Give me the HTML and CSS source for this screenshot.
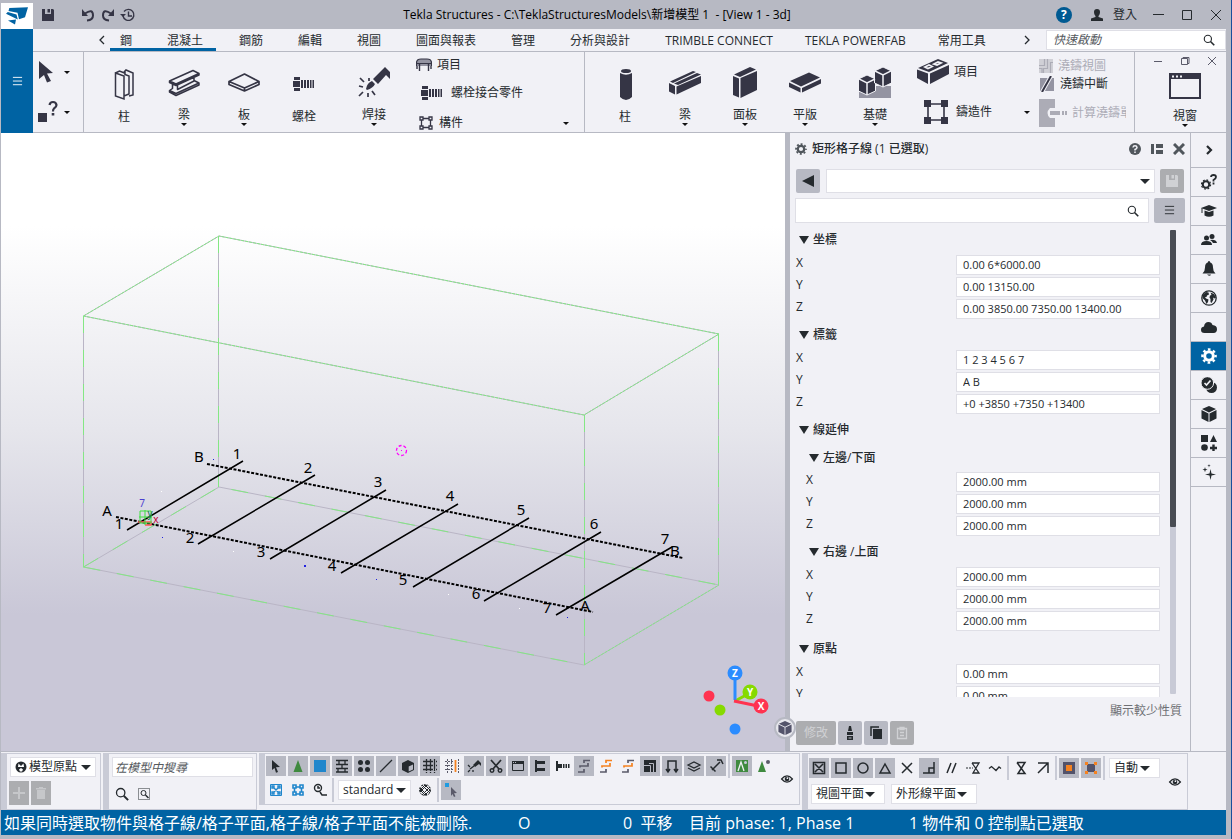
FILE: index.html
```html
<!DOCTYPE html>
<html lang="zh-Hant">
<head>
    <meta charset="UTF-8">
    <meta name="viewport" content="width=device-width, initial-scale=1.0">
    <title>Tekla Structures</title>
    <link rel="stylesheet" href="styles.css">
</head>
<body>
    <!-- shared icons -->
    <svg class="sprite">
        <symbol id="i-search" viewBox="0 0 16 16"><circle cx="6.500" cy="6.500" r="4.800" fill="none" stroke="currentColor" stroke-width="1.500"/><path d="M10 10l5 5" stroke="currentColor" stroke-width="2.200"/></symbol>
        <symbol id="i-save" viewBox="0 0 16 16"><path fill="currentColor" d="M2 2h3v5h6V2h2l1 1v11H2z"/><path fill="currentColor" d="M7.500 2H10v3.500H7.500z"/></symbol>
        <symbol id="i-list" viewBox="0 0 12 12"><path d="M1 1.500h10M1 5.500h10M1 9.500h10" stroke="currentColor"/></symbol>
        <symbol id="i-gear" viewBox="0 0 16 16"><circle cx="8" cy="8" r="4.300" fill="none" stroke="currentColor" stroke-width="3"/><circle cx="8" cy="8" r="6.600" fill="none" stroke="currentColor" stroke-width="2.400" stroke-dasharray="2.600 2.584" stroke-dashoffset="1.300"/></symbol>
        <symbol id="i-bolt" viewBox="0 0 24 16"><path fill="currentColor" d="M2 1h6v3H2zM1 5h7v6H1zM2 12h6v3H2zM9 4h2v8H9zM12 4h2v8h-2zM15 4h2v8h-2zM18 4h1.500v8H18zM20.500 4H22v8h-1.500z"/></symbol>
        <symbol id="i-cube" viewBox="0 0 16 16"><path fill="currentColor" d="M8 0l7 3-7 3.500L1 3zM0.500 4L7.500 7.500V16L.5 12.500zM15.500 4L8.500 7.500V16l7-3.500z"/></symbol>
        <symbol id="i-eye" viewBox="0 0 16 12"><path d="M1.500 6Q8-1.500 14.500 6 8 13.500 1.500 6z" fill="none" stroke="currentColor" stroke-width="1.500"/><circle cx="8" cy="6" r="2.800" fill="currentColor"/><circle cx="8.500" cy="5" r="1" fill="#f1f1f6"/></symbol>
        <symbol id="i-globe" viewBox="0 0 16 16"><circle cx="8" cy="8" r="7.200" fill="none" stroke="currentColor" stroke-width="1.300"/><path fill="currentColor" d="M2 4.500L5 2l2.500.5.5 2-2 1-.5 1.500H4l1 1.500 2.500 1L7 12l-1.500 2L4 10.500 1.500 8zM9.500 2.500L13 4l2 3.500-1.500 1L12 7.500l.5 2-2 3.500-1-1V9L8.500 7.500l.5-2 1.500-.5z"/></symbol>
    </svg>

    <header class="titlebar">
        <div class="logo">
            <svg width="26" height="22" viewBox="0 0 26 22"><path fill="#0063a3" d="M5.300 3L24 2.300l-3 10-6 2-1.500-6.500L4.500 6zM3.800 7L12.500 9.500l1.300 5L2 8.700zM4 15.500l8-1-1 5z"/></svg>
        </div>
        <button class="quick" aria-label="Save"><svg width="16" height="16"><use href="#i-save"/></svg></button>
        <div class="history">
            <button class="quick" aria-label="Undo"><svg width="16" height="16" viewBox="0 0 16 16"><path d="M5 6.500Q13 1 13 8.500 13 13 7 13.500" fill="none" stroke="currentColor" stroke-width="2"/><path fill="currentColor" d="M2 2v7h6z"/></svg></button>
            <button class="quick" aria-label="Redo"><svg width="16" height="16" viewBox="0 0 16 16"><path d="M11 6.500Q3 1 3 8.500 3 13 9 13.500" fill="none" stroke="currentColor" stroke-width="2"/><path fill="currentColor" d="M14 2v7H8z"/></svg></button>
            <button class="quick" aria-label="History"><svg width="16" height="16" viewBox="0 0 16 16"><path d="M3 9a5.500 5.500 0 1 0 1-4.500M8.500 4.500V9H12" fill="none" stroke="currentColor" stroke-width="1.400"/><path fill="currentColor" d="M0 7h6L3 10z"/></svg></button>
        </div>
        <h1 class="title">Tekla Structures - C:\TeklaStructuresModels\新增模型 1&nbsp; - [View 1 - 3d]</h1>
        <div class="account">
            <button class="help" aria-label="Help">?</button>
            <button class="login"><svg width="14" height="14" viewBox="0 0 14 14"><path fill="currentColor" d="M7 1a3 3 0 0 1 3 3c0 2-.8 3-1.500 4v1l4.500 1.500V13H1v-2.500L5.500 9V8C4.800 7 4 6 4 4a3 3 0 0 1 3-3z"/></svg>登入</button>
            <button class="win" aria-label="Minimize"><svg width="12" height="12"><path d="M1 5.500h11" stroke="currentColor"/></svg></button>
            <button class="win" aria-label="Maximize"><svg width="12" height="12"><path d="M1.500 1.500h9v9h-9z" fill="none" stroke="currentColor"/></svg></button>
            <button class="win" aria-label="Close"><svg width="12" height="12"><path d="M1 1l10 10M11 1L1 11" stroke="currentColor"/></svg></button>
        </div>
    </header>

    <div class="top">
        <button class="menu" aria-label="Menu"><svg width="11" height="11"><use href="#i-list"/></svg></button>
        <div class="top-main">
            <nav class="tabs">
                <button class="arrow" aria-label="Previous"><svg width="6" height="10"><path d="M5 1L1 5l4 4" fill="none" stroke="currentColor" stroke-width="1.300"/></svg></button>
                <div class="tab-list">
                    <div class="tab-open">
                        <button class="tab">鋼</button>
                        <button class="tab">混凝土</button>
                    </div>
                    <button class="tab">鋼筋</button>
                    <button class="tab">編輯</button>
                    <button class="tab">視圖</button>
                    <button class="tab">圖面與報表</button>
                    <button class="tab">管理</button>
                    <button class="tab">分析與設計</button>
                    <button class="tab latin">TRIMBLE CONNECT</button>
                    <button class="tab latin">TEKLA POWERFAB</button>
                    <button class="tab">常用工具</button>
                </div>
                <button class="arrow" aria-label="Next"><svg width="6" height="10"><path d="M1 1l4 4-4 4" fill="none" stroke="currentColor" stroke-width="1.300"/></svg></button>
                <label class="launch"><input type="text" placeholder="快速啟動" aria-label="快速啟動"><svg width="12" height="12"><use href="#i-search"/></svg></label>
            </nav>

            <div class="ribbon">
                <div class="pickers">
                    <button class="picker drop" aria-label="Select"><svg width="22" height="24" viewBox="0 0 22 24"><path fill="currentColor" d="M2 1l14 12-6 .5L14 21l-4 1.500L7 15l-5 4z"/></svg></button>
                    <button class="picker drop" aria-label="Inquire"><svg width="22" height="24" viewBox="0 0 22 24"><path fill="currentColor" d="M1 13h9v9H1z"/><path d="M12.500 5Q13 2 16 2t3.500 3Q19.500 7 17 8.500q-1 .8-1 3" fill="none" stroke="currentColor" stroke-width="2.200"/><path fill="currentColor" d="M14.700 13h2.600v2.500h-2.600z"/></svg></button>
                </div>
                <div class="tools steel">
                    <button class="tool"><svg width="32" height="32" viewBox="0 0 32 32"><g fill="none" stroke="currentColor" stroke-width="1.500"><path d="M7.500 5l8.500 3v23l-8.500-3zM16 4l2-2 7 3v22l-4 1M7.500 5l4-2 5 2M16 28l5-2V8l-4-1.500V2.500"/></g></svg><span>柱</span></button>
                    <button class="tool drop"><svg width="32" height="32" viewBox="0 0 32 32"><g fill="none" stroke="currentColor" stroke-width="1.500" stroke-linejoin="round"><path d="M1.500 14L25 3.500 31 6.500 8 17zM1.500 14v1.500L8 18.500V17M8 18.500L31 8V6.500M4.500 17.500v4L1.500 23.500 8 26.500 31 16l-5-2.500M1.500 23.500V25L8 28.500 31 18v-2M9.500 18.500v4L26 14v-3"/></g></svg><span>梁</span></button>
                    <button class="tool drop"><svg width="32" height="32" viewBox="0 0 32 32"><path d="M1 14.500L16.500 7 31 14.500v3L16.500 24 1 17.500zM1 14.500L16.500 21 31 14.500M16.500 21v3" fill="none" stroke="currentColor" stroke-width="1.700" stroke-linejoin="round"/></svg><span>板</span></button>
                    <button class="tool"><svg class="bolt" width="24" height="16"><use href="#i-bolt"/></svg><span>螺栓</span></button>
                    <button class="tool wide drop"><svg width="32" height="34" viewBox="0 0 32 34"><path fill="currentColor" d="M15 13L27 1l5 5v7l-4-4-8 9zM8 23q1-6 6-8l3 3q-2 4-8 6z"/><path d="M1 20l4 1M2 12l4 4M11 12v3M1 30l4-4M10 27v4M14 25l3 4" stroke="currentColor" stroke-width="1.700"/></svg><span>焊接</span></button>
                </div>
                <div class="list-tools components">
                    <button class="row-tool"><svg width="16" height="14" viewBox="0 0 16 14"><path d="M.5 8V5Q.5 1 5 1h6q4.500 0 4.500 4v3M.5 5.500h15" fill="#9494a2" stroke="currentColor" stroke-width="1.200"/><path d="M3.500 6v7M12.500 6v7M1 8v3M15 8v3" stroke="currentColor" stroke-width="1.400"/></svg>項目</button>
                    <button class="row-tool indent"><svg width="24" height="16"><use href="#i-bolt"/></svg>螺栓接合零件</button>
                    <button class="row-tool drop-end inset"><svg width="14" height="14" viewBox="0 0 14 14"><path d="M1 1h3v3H1zM10 1h3v3h-3zM1 10h3v3H1zM10 10h3v3h-3zM4 2.500h6M4 11.500h6M2.500 4v6M11.500 4v6" fill="none" stroke="currentColor" stroke-width="1.300"/></svg>構件</button>
                </div>
                <div class="tools concrete">
                    <button class="tool"><svg width="32" height="32" viewBox="0 0 32 32"><path fill="currentColor" d="M11 5q6 3.500 12 0v24q-6 6-12 0z"/><ellipse cx="17" cy="3" rx="5" ry="2" fill="currentColor"/></svg><span>柱</span></button>
                    <button class="tool drop"><svg width="32" height="32" viewBox="0 0 32 32"><path fill="currentColor" d="M1 14.500L24 4l3 1L4 16zM5 16.500L28 6l4 1.500L9 18zM0 16l6 3v8.500l-6-3zM7.500 19.500L32 9v7L7.500 27.500z"/></svg><span>梁</span></button>
                    <button class="tool drop"><svg width="32" height="34" viewBox="0 0 32 34"><path fill="currentColor" d="M5 8.500L21 1l6 2.500L11 11zM4 10l6 2.500v19L4 29zM11.500 12L28 5v19l-16.500 8z"/></svg><span>面板</span></button>
                    <button class="tool drop"><svg width="32" height="32" viewBox="0 0 32 32"><path fill="currentColor" d="M1 14L20 5.500l11 5L12 19.500zM0 15.500L11.500 21v4.500L0 20zM13 21l19-9v4.500l-19 9z"/></svg><span>平版</span></button>
                    <button class="tool wide drop"><svg width="32" height="34" viewBox="0 0 32 34"><path fill="#9494a2" d="M0 24h8l8-3V20h16v12H0z"/><g fill="currentColor" stroke="#f1f1f6"><path d="M8 9l8.500 4v12L8 29-.5 25V13z"/><path d="M24 1l8.500 4v12L24 21l-8.500-4V5z"/></g><path d="M0 13l8 4 8-4M8 17v12M16 5l8 4 8-4M24 9v12" fill="none" stroke="#f1f1f6" stroke-width="1.500"/></svg><span>基礎</span></button>
                </div>
                <div class="list-tools cast">
                    <button class="row-tool big"><svg width="32" height="28" viewBox="0 0 32 28"><path fill="currentColor" d="M1 10L21 1l10 4-19 9zM0 11.500l11 4V26L0 20zM13 15.500L32 7v9L13 26z"/><path d="M8 9l4-2 3 1.500-4 2zM17 6l4-2 3 1-4 2z" fill="none" stroke="#f1f1f6" stroke-width="1.800"/></svg>項目</button>
                    <button class="row-tool big drop-end"><svg width="26" height="26" viewBox="0 0 26 26"><path d="M1 1h7v7H1zM18 1h7v7h-7zM1 18h7v7H1zM18 18h7v7h-7z" fill="currentColor"/><path d="M5 5h16v16H5z" fill="none" stroke="currentColor" stroke-width="1.600"/></svg>鑄造件</button>
                </div>
                <div class="list-tools pour">
                    <button class="row-tool" disabled><svg width="14" height="14" viewBox="0 0 14 14"><path fill="#d0d0d6" d="M0 0h14v14H0z"/><path d="M0 6.500h5.500V0M0 9.500h3V14M8.500 0v9.500H4.500V14M14 3.500h-2.500V14" fill="none" stroke="currentColor" stroke-width="1.200"/></svg>澆鑄視圖</button>
                    <button class="row-tool"><svg width="16" height="16" viewBox="0 0 16 16"><path fill="#9494a2" d="M1 2h14v13H1z"/><path d="M3 16L12 0" stroke="#f1f1f6" stroke-width="4"/><path d="M3 16L12 0" stroke="currentColor" stroke-width="2"/></svg>澆鑄中斷</button>
                    <button class="row-tool last" disabled><svg width="28" height="28" viewBox="0 0 28 28"><path fill="currentColor" d="M0 0h16v9h-5q-5 5 0 10h5v9H0z"/><path d="M11 14h10" stroke="currentColor" stroke-width="4"/><path d="M23 14h5" stroke="currentColor" stroke-width="4" stroke-dasharray="2 1"/></svg>計算澆鑄單</button>
                </div>
                <div class="windows">
                    <div class="mdi">
                        <button aria-label="Minimize view"><svg width="10" height="10"><path d="M1 5.500h8" stroke="currentColor"/></svg></button>
                        <button aria-label="Restore view"><svg width="10" height="10"><path d="M1.500 2.500h6v6h-6zM3 2.500v-1h6v6H7.500" fill="none" stroke="currentColor"/></svg></button>
                        <button aria-label="Close view"><svg width="10" height="10"><path d="M1 1l8 8M9 1L1 9" stroke="currentColor"/></svg></button>
                    </div>
                    <button class="tool drop"><svg width="32" height="26" viewBox="0 0 32 26"><path d="M1 1h30v24H1z" fill="none" stroke="currentColor" stroke-width="2"/><path fill="currentColor" d="M1 1h30v5H1z"/><path d="M3 3.500h10" stroke="#f1f1f6" stroke-width="2" stroke-dasharray="2 2"/></svg><span>視窗</span></button>
                </div>
            </div>
        </div>
    </div>

    <main class="work">
        <section class="view">
            <svg class="model" viewBox="1 133 784 618" preserveAspectRatio="xMinYMin meet">
                <!-- work area box -->
                <g fill="none" stroke="#b9b5c5">
                    <path d="M83.500 316L219 236l500 98-135 81zM83.500 567L219 487l500 98-135 80zM83.500 316v251M218.500 236v251M718.500 334v251M584.500 415v250"/>
                    <path stroke="#84e784" stroke-dasharray="17 17" d="M83.500 567L219 487l500 98M83.500 567L584 665M83.500 316v251M218.500 236v251M718.500 334v251M584.500 415v250"/>
                    <path stroke="#84e784" stroke-dasharray="3 1" d="M83.500 316L219 236l500 98-135 81zM584 665l135-80"/>
                </g>
                <!-- grid -->
                <g stroke="#000" stroke-width="1.500">
                    <path stroke-width="2" stroke-dasharray="3 1.500" d="M116 517l477 95M207 464l476 94"/>
                    <path d="M127 530l116-69M198 544l117-69M270 559l116-69M341 573l117-69M413 587l116-69M484 601l117-69M556 615l116-68"/>
                </g>
                <g class="grid-text">
                    <text x="237" y="459">1</text><text x="308" y="473">2</text><text x="378" y="487">3</text><text x="450" y="501">4</text><text x="521" y="515">5</text><text x="594" y="529">6</text><text x="665" y="544">7</text>
                    <text x="119" y="529">1</text><text x="190" y="543">2</text><text x="261" y="557">3</text><text x="332" y="571">4</text><text x="403" y="585">5</text><text x="476" y="599">6</text><text x="547" y="613">7</text>
                    <text x="199" y="462">B</text><text x="107" y="516">A</text><text x="675" y="556">B</text><text x="585" y="611">A</text>
                </g>
                <!-- origin marker -->
                <path d="M138 522h13v3h-6" fill="none" stroke="#f55" stroke-width="1.500"/>
                <path d="M140 511h11v12h-11zM145 510v15M139 517h13" fill="none" stroke="#3ee03e"/>
                <text class="axis-z" x="142" y="507">7</text>
                <text class="axis-y" x="150" y="517">y</text>
                <text class="axis-x" x="156" y="523">x</text>
                <circle cx="401.500" cy="450.500" r="5" fill="none" stroke="#f0f" stroke-width="1.300" stroke-dasharray="3 2"/>
                <path fill="#f0f" d="M401 450h1v1h-1z"/>
                <path fill="#2222e0" d="M304 565h2v2h-2zM376 579h1v1h-1zM567 617h1v1h-1zM213 459h1v1h-1zM162 537h1v1h-1z"/>
                <path fill="#fff" d="M161 491h1v1h-1zM233 551h1v1h-1zM519 608h1v1h-1zM448 594h1v1h-1z"/>
                <!-- orientation gizmo -->
                <path d="M735 701l13-7" stroke="#86da00" stroke-width="3"/>
                <path d="M735 700v-24" stroke="#2b8cff" stroke-width="3"/>
                <path d="M734 701l24 5" stroke="#ff3350" stroke-width="3"/>
                <circle cx="735" cy="673" r="7.500" fill="#2b8cff"/><circle cx="750" cy="692" r="7.500" fill="#86da00"/><circle cx="761" cy="706" r="7.500" fill="#ff3350"/>
                <circle cx="709" cy="696" r="5.500" fill="#ff3350"/><circle cx="720" cy="710" r="5.500" fill="#86da00"/><circle cx="735" cy="729" r="5.500" fill="#2b8cff"/>
                <g class="ball-text"><text x="735" y="677">Z</text><text x="750" y="696">Y</text><text x="761" y="710">X</text></g>
            </svg>
            <button class="view-cube" aria-label="View cube"><svg width="14" height="14"><use href="#i-cube"/></svg></button>
        </section>

        <aside class="props">
            <header class="props-head">
                <svg width="12" height="12"><use href="#i-gear"/></svg>
                <h2>矩形格子線 (1 已選取)</h2>
                <button aria-label="Help"><svg width="12" height="12" viewBox="0 0 12 12"><circle cx="6" cy="6" r="6" fill="currentColor"/><path d="M4 4.500Q4.200 2.700 6 2.700T8 4.400Q8 5.500 6 6.500V7.500M6 8.500V10" fill="none" stroke="#f1f1f6" stroke-width="1.500"/></svg></button>
                <button aria-label="Layout"><svg width="12" height="12" viewBox="0 0 12 12"><path fill="currentColor" d="M0 1h3v10H0zM5 1h7v4H5zM5 7h7v4H5z"/></svg></button>
                <button aria-label="Close"><svg width="12" height="12" viewBox="0 0 12 12"><path d="M1 1l10 10M11 1L1 11" stroke="currentColor" stroke-width="3"/></svg></button>
            </header>
            <div class="props-bar">
                <button class="sq" aria-label="Back"><svg width="12" height="12"><path fill="currentColor" d="M0 6l12-6v12z"/></svg></button>
                <span class="pick preset"><select aria-label="Preset"><option></option></select></span>
                <button class="sq" disabled aria-label="Save"><svg width="16" height="16"><use href="#i-save"/></svg></button>
            </div>
            <div class="props-bar second">
                <label class="find"><input type="text" aria-label="Search properties"><svg width="12" height="12"><use href="#i-search"/></svg></label>
                <button class="sq list" aria-label="List"><svg width="11" height="11"><use href="#i-list"/></svg></button>
            </div>
            <div class="props-body">
                <div class="fields">
                    <h3>坐標</h3>
                    <label>X<input type="text" value="0.00 6*6000.00"></label>
                    <label>Y<input type="text" value="0.00 13150.00"></label>
                    <label>Z<input type="text" value="0.00 3850.00 7350.00 13400.00"></label>
                    <h3>標籤</h3>
                    <label>X<input type="text" value="1 2 3 4 5 6 7"></label>
                    <label>Y<input type="text" value="A B"></label>
                    <label>Z<input type="text" value="+0 +3850 +7350 +13400"></label>
                    <h3>線延伸</h3>
                    <div class="nested">
                        <h4>左邊/下面</h4>
                        <label>X<input type="text" value="2000.00 mm"></label>
                        <label>Y<input type="text" value="2000.00 mm"></label>
                        <label>Z<input type="text" value="2000.00 mm"></label>
                        <h4>右邊 /上面</h4>
                        <label>X<input type="text" value="2000.00 mm"></label>
                        <label>Y<input type="text" value="2000.00 mm"></label>
                        <label>Z<input type="text" value="2000.00 mm"></label>
                    </div>
                    <h3>原點</h3>
                    <label>X<input type="text" value="0.00 mm"></label>
                    <label>Y<input type="text" value="0.00 mm"></label>
                </div>
                <div class="track"><div class="thumb"></div></div>
            </div>
            <a class="less" href="#">顯示較少性質</a>
            <footer class="props-foot">
                <button class="sq modify" disabled>修改</button>
                <button class="sq" aria-label="Clean"><svg width="12" height="14" viewBox="0 0 12 14"><path fill="currentColor" d="M5 0h2l1 5H4zM3 6h6v3H3zM3 10h6v4H3z"/><path d="M4.500 12h3" stroke="#b7b9c3"/></svg></button>
                <button class="sq" aria-label="Copy"><svg width="12" height="14" viewBox="0 0 12 14"><path fill="currentColor" d="M3 3h9v10H3z"/><path d="M1 10V1h8" fill="none" stroke="currentColor" stroke-width="1.500"/></svg></button>
                <button class="sq" disabled aria-label="Paste"><svg width="12" height="14" viewBox="0 0 12 14"><path d="M1.500 2.500h9v10h-9zM4 1.500h4v2H4zM4 6.500h4M4 9.500h4" fill="none" stroke="currentColor" stroke-width="1.300"/></svg></button>
            </footer>
        </aside>

        <nav class="side">
            <button aria-label="Collapse"><svg width="16" height="16"><path d="M6 4l4 4-4 4" fill="none" stroke="currentColor" stroke-width="2.200"/></svg></button>
            <button aria-label="Settings help"><svg width="16" height="16" viewBox="0 0 16 16"><circle cx="5" cy="10.500" r="3.200" fill="none" stroke="currentColor" stroke-width="2"/><circle cx="5" cy="10.500" r="4.600" fill="none" stroke="currentColor" stroke-width="1.200" stroke-dasharray="1.800 1.800"/><path d="M10 3Q10 1 12.500 1T15 3q0 1.500-2.500 3v1.500M12.500 8.500v2" fill="none" stroke="currentColor" stroke-width="1.800"/></svg></button>
            <button aria-label="Learning"><svg width="16" height="16" viewBox="0 0 16 16"><path fill="currentColor" d="M0 5l8-3 8 3-8 3zM3.500 7.500L8 9l4.500-1.500v5Q8 15 3.500 12.500z"/><path d="M1 5v5" stroke="currentColor"/></svg></button>
            <button aria-label="People"><svg width="16" height="16" viewBox="0 0 16 16"><circle cx="5.500" cy="6" r="2.500" fill="currentColor"/><circle cx="11" cy="4.500" r="2.500" fill="currentColor"/><path fill="currentColor" d="M0 13q0-4 5.500-4t5.500 4zM9 8q6-1 7 3h-4Q11 9 9 8z"/></svg></button>
            <button aria-label="Notifications"><svg width="16" height="16" viewBox="0 0 16 16"><path fill="currentColor" d="M8 0q1 0 1 1.200 3 1 3 5.300 0 4 2.500 6h-13q2.500-2 2.500-6 0-4.300 3-5.300Q7 0 8 0zM6 13.500h4q-1 2.500-4 0z"/></svg></button>
            <button aria-label="Online"><svg width="16" height="16"><use href="#i-globe"/></svg></button>
            <button aria-label="Cloud"><svg width="16" height="16" viewBox="0 0 16 16"><path fill="currentColor" d="M3.500 14Q0 14 0 10.800 0 8 3 7.500 3.500 3 7.500 3q3.200 0 4 3Q16 6.500 16 10.300 16 14 12.500 14z"/></svg></button>
            <button class="active" aria-label="Properties"><svg width="16" height="16"><use href="#i-gear"/></svg></button>
            <button aria-label="Validate"><svg width="16" height="16" viewBox="0 0 16 16"><circle cx="10.500" cy="10.500" r="5.500" fill="currentColor"/><circle cx="6.300" cy="6" r="6.300" fill="currentColor" stroke="#f1f1f6"/><path d="M3.500 6l2 2 4-4.500" fill="none" stroke="#f1f1f6" stroke-width="1.700"/></svg></button>
            <button aria-label="Model"><svg width="16" height="16"><use href="#i-cube"/></svg></button>
            <button aria-label="Applications"><svg width="16" height="16" viewBox="0 0 16 16"><path fill="currentColor" d="M0 0h7v7H0zM12.500 0L16 7H9zM11.300 9.500h2.400v2.300H16v2.400h-2.300v2.300h-2.400v-2.300H9v-2.400h2.300z"/><circle cx="3.500" cy="12.500" r="3.300" fill="currentColor"/></svg></button>
            <button aria-label="Assistant"><svg width="16" height="16" viewBox="0 0 16 16"><path fill="currentColor" d="M9.500 5l1 4.500L15 10.500l-4.500 1-1 4.500-1-4.500-4.500-1 4.500-1zM4 3l.6 2 2 .6-2 .6L4 8.200l-.6-2-2-.6 2-.6zM8 0l.4 1.300 1.300.4-1.300.4L8 3.500l-.4-1.400-1.300-.4 1.300-.4z"/></svg></button>
        </nav>
    </main>

    <div class="docks">
        <section class="dock origin">
            <label class="pick box"><svg width="12" height="12" viewBox="0 0 12 12"><circle cx="6" cy="6" r="5.500" fill="currentColor"/><path fill="#fff" d="M3.500 2.500L6 5l2.500-2.500L9 6H3zM4 8.500L6 7l2 1.500-1 2H5z"/></svg><select aria-label="Origin"><option>模型原點</option></select></label>
            <div class="line">
                <button class="ic gray" disabled aria-label="Add"><svg width="14" height="14"><path d="M7 1v12M1 7h12" stroke="currentColor" stroke-width="2"/></svg></button>
                <button class="ic gray" disabled aria-label="Delete"><svg width="14" height="14"><path fill="currentColor" d="M3 4h8v9H3zM2 2h3V1h4v1h3v1.500H2z"/></svg></button>
            </div>
        </section>

        <section class="dock model-find">
            <input type="text" placeholder="在模型中搜尋" aria-label="在模型中搜尋">
            <div class="line">
                <button class="ic" aria-label="Search"><svg width="14" height="14"><use href="#i-search"/></svg></button>
                <button class="ic" aria-label="Search area"><svg width="14" height="14" viewBox="0 0 14 14"><path d="M1.500 1.500h11v11h-11z" fill="none" stroke="currentColor" stroke-dasharray="1 1"/><circle cx="6.500" cy="6" r="2.500" fill="none" stroke="currentColor"/><path d="M8.500 8l3 3" stroke="currentColor" stroke-width="1.500"/></svg></button>
            </div>
        </section>

        <section class="dock select-dock">
            <div class="lines">
                <div class="line">
                    <button class="ic on" aria-label="Select all"><svg width="16" height="16"><path fill="currentColor" d="M4 2l8 7-4 .3L10 14l-2 .8L6.500 10 4 12z"/></svg></button>
                    <button class="ic on" aria-label="Connections"><svg width="16" height="16"><path fill="#3f8a3f" d="M8 2l4.500 12h-9z"/></svg></button>
                    <button class="ic on" aria-label="Parts"><svg width="16" height="16"><path fill="#1f86cc" d="M2 2h12v12H2z"/></svg></button>
                    <button class="ic on" aria-label="Surface"><svg width="16" height="16"><path d="M2 2.500h12M2 6.500h12M2 10.500h12M5 3v3M11 3v3M8 7v3M4 11v3M11 11v3M2 14h12" stroke="currentColor" stroke-width="1.300"/></svg></button>
                    <button class="ic on" aria-label="Points"><svg width="16" height="16"><g fill="currentColor"><circle cx="4.500" cy="4.500" r="2.500"/><circle cx="11.500" cy="4.500" r="2.500"/><circle cx="4.500" cy="11.500" r="2.500"/><circle cx="11.500" cy="11.500" r="2.500"/></g></svg></button>
                    <button class="ic on" aria-label="Lines"><svg width="16" height="16"><path d="M2 14L14 2" stroke="currentColor" stroke-width="1.300"/></svg></button>
                    <button class="ic on" aria-label="Reference models"><svg width="16" height="16" viewBox="0 0 16 16"><path fill="currentColor" d="M8 2l6 3v7l-6 3-6-3V5z"/><path fill="#b7b9c3" d="M8.700 8.500L13 6.500v5l-4.300 2z"/></svg></button>
                    <button class="ic on" aria-label="Grid"><svg width="16" height="16"><path d="M1 3.500h14M1 7.500h14M1 11.500h14M4.500 1v14M8.500 1v14M12.500 1v14" stroke="currentColor" stroke-width="1.300" stroke-dasharray="10 1 1 1"/></svg></button>
                    <button class="ic" aria-label="Grid line"><svg width="16" height="16"><path d="M1 3.500h9M1 7.500h9M1 11.500h9M3.500 1v14M7.500 1v14M14.500 1v14" stroke="#5b5b6a" stroke-dasharray="2 1"/><path d="M11.500 2v12" stroke="#f58220" stroke-width="1.800"/></svg></button>
                    <button class="ic on" aria-label="Welds"><svg width="16" height="16"><path fill="currentColor" d="M7 7l5-5 3 3v3l-2-2-4 3z"/><path d="M4 11l4-3M2 7l2 2M2 14l2-2M7 12v2" stroke="currentColor" stroke-width="1.300"/></svg></button>
                    <button class="ic on" aria-label="Cuts"><svg width="16" height="16"><path d="M3 2l8 9M13 2l-8 9" stroke="currentColor" stroke-width="1.700"/><g fill="none" stroke="currentColor" stroke-width="1.400"><circle cx="4" cy="12.500" r="1.800"/><circle cx="12" cy="12.500" r="1.800"/></g></svg></button>
                    <button class="ic on" aria-label="Views"><svg width="16" height="16"><path d="M2.500 3.500h11v9h-11z" fill="none" stroke="currentColor"/><path d="M2 4.500h12" stroke="currentColor" stroke-width="3"/><path d="M3 4.500h4" stroke="#b7b9c3" stroke-dasharray="1 1"/></svg></button>
                    <button class="ic on" aria-label="Fittings"><svg width="16" height="16"><path fill="currentColor" d="M3 2h2v12H3zM5 3h8v3H5zM5 10h8v3H5z"/></svg></button>
                    <button class="ic" aria-label="Bolts"><svg width="16" height="16"><path fill="currentColor" d="M2 3h2v10H2zM4 6h4v4H4zM9 6h1.500v4H9zM11.500 6H13v4h-1.500zM14 6h1.500v4H14z"/></svg></button>
                    <button class="ic on" aria-label="Rebar set"><svg width="16" height="16"><g fill="none" stroke="#5b5b6a" stroke-width="1.700"><path d="M8 5V2.500h6M4 9.500V8h8V5M2 14h6v-3"/></g></svg></button>
                    <button class="ic" aria-label="Rebar group"><svg width="16" height="16"><g fill="none" stroke="#f58220" stroke-width="1.700"><path d="M8 5V2.500h6M4 9.500V8h8V5"/><path stroke="#5b5b6a" d="M2 14h6v-3"/></g></svg></button>
                    <button class="ic" aria-label="Single rebar"><svg width="16" height="16"><g fill="none" stroke="#5b5b6a" stroke-width="1.700"><path d="M8 5V2.500h6M2 14h6v-3"/><path stroke="#f58220" d="M4 9.500V8h8V5"/></g></svg></button>
                    <button class="ic on" aria-label="Pour"><svg width="16" height="16"><path fill="currentColor" d="M2 2h12v12H2z"/><path d="M2 7.500h6.500V14M7 5.500h4.500V14" stroke="#b7b9c3" fill="none"/></svg></button>
                    <button class="ic on" aria-label="Load"><svg width="16" height="16"><path d="M4 13V3h8v10M2 11l2 3 2-3M10 11l2 3 2-3" fill="none" stroke="currentColor" stroke-width="1.500"/></svg></button>
                    <button class="ic on" aria-label="Planes"><svg width="16" height="16"><path d="M2 7l6-3 6 3-6 3zM2 10l6 3 6-3" fill="none" stroke="currentColor" stroke-width="1.300"/></svg></button>
                    <button class="ic on" aria-label="Distances"><svg width="16" height="16"><path d="M4 12l8-8M2.500 8.500l5 5M9 2h4l2 4" fill="none" stroke="currentColor" stroke-width="1.500"/></svg></button>
                    <i class="sep"></i>
                    <button class="ic on" aria-label="Components"><svg width="16" height="16"><path fill="#3f8a3f" d="M2 2h12v12H2z"/><path d="M4 13l3-9 3 9" fill="none" stroke="#f1f1f6" stroke-width="1.300"/><circle cx="11.500" cy="4.500" r="1.500" fill="#ccd"/></svg></button>
                    <button class="ic" aria-label="Component objects"><svg width="16" height="16"><path fill="#3f8a3f" d="M6 3l4 11H2z"/><circle cx="12" cy="4" r="2" fill="#5b5b6a"/></svg></button>
                </div>
                <div class="line">
                    <button class="ic" aria-label="Assemblies"><svg width="16" height="16"><path d="M2.500 2.500h11v11h-11z" fill="none" stroke="#1f86cc"/><path d="M4 4h2v2H4zM10 4h2v2h-2zM4 10h2v2H4zM10 10h2v2h-2zM6 6l4 4M10 6l-4 4" fill="none" stroke="#1f86cc" stroke-width="1.400"/></svg></button>
                    <button class="ic" aria-label="Objects in assemblies"><svg width="16" height="16"><path d="M3 3h3v3H3zM10 3h3v3h-3zM3 10h3v3H3zM10 10h3v3h-3zM6 5h4M6 12h4M4.500 6v4M11.500 6v4" fill="none" stroke="#1f86cc" stroke-width="1.600"/></svg></button>
                    <button class="ic" aria-label="Tasks"><svg width="16" height="16"><circle cx="6" cy="6" r="3.500" fill="none" stroke="currentColor" stroke-width="1.400"/><path d="M6 4v2h2M8 10l2 3h5" fill="none" stroke="currentColor" stroke-width="1.500"/></svg></button>
                    <i class="sep"></i>
                    <span class="pick box filter"><select aria-label="Filter"><option>standard</option></select></span>
                    <button class="ic" aria-label="Filter settings"><svg width="16" height="16"><circle cx="8" cy="8" r="5.500" fill="none" stroke="currentColor" stroke-dasharray="2 1"/><path d="M3 6l7 7M5 3l8 8M3 10l7-7M5 13l8-8M3 8l5 5M8 3l5 5M3 8l5-5M8 13l5-5" stroke="currentColor"/></svg></button>
                    <i class="sep"></i>
                    <button class="ic on" aria-label="Direct modification"><svg width="16" height="16"><path fill="#1f9be0" d="M2 1h4v4H2z"/><path fill="#5b5b6a" d="M8 5l6 6-3 .3 1.500 3-1.500.7-1.500-3-1.500 2z"/></svg></button>
                </div>
            </div>
            <button class="eye" aria-label="Show"><svg width="14" height="10"><use href="#i-eye"/></svg></button>
        </section>

        <section class="dock snap-dock">
            <div class="lines">
                <div class="line">
                    <button class="ic on" aria-label="Reference points"><svg width="16" height="16"><path d="M2.500 2.500h11v11h-11zM4 4l8 8M12 4l-8 8" fill="none" stroke="currentColor" stroke-width="1.600"/></svg></button>
                    <button class="ic on" aria-label="End points"><svg width="16" height="16"><path d="M3 3h10v10H3z" fill="none" stroke="currentColor" stroke-width="1.500"/></svg></button>
                    <button class="ic on" aria-label="Centre"><svg width="16" height="16"><circle cx="8" cy="8" r="5" fill="none" stroke="currentColor" stroke-width="1.500"/></svg></button>
                    <button class="ic on" aria-label="Mid points"><svg width="16" height="16"><path d="M8 4l5 9H3z" fill="none" stroke="currentColor" stroke-width="1.500"/></svg></button>
                    <button class="ic" aria-label="Intersection"><svg width="16" height="16"><path d="M3 3l10 10M13 3L3 13" stroke="currentColor" stroke-width="1.500"/></svg></button>
                    <button class="ic on" aria-label="Perpendicular"><svg width="16" height="16"><path d="M2 13h11V2M8 13V8h5" fill="none" stroke="currentColor" stroke-width="1.500"/></svg></button>
                    <button class="ic" aria-label="Parallel"><svg width="16" height="16"><path d="M4 13L8 3M9 13l4-10" stroke="currentColor" stroke-width="1.500"/></svg></button>
                    <button class="ic" aria-label="Extension"><svg width="16" height="16"><path d="M7 3h7L8 13h6L7 3" fill="none" stroke="currentColor" stroke-width="1.300"/><path d="M1 8h7" stroke="currentColor" stroke-dasharray="2 1"/></svg></button>
                    <button class="ic" aria-label="Free"><svg width="16" height="16"><path d="M2 8.500l2.500-2 4.500 4 3-3.500 2 1.500" fill="none" stroke="currentColor" stroke-width="1.300"/></svg></button>
                    <i class="sep"></i>
                    <button class="ic" aria-label="Nearest"><svg width="16" height="16"><path d="M4 2.500h8L5 13.500h7L4 2.500" fill="none" stroke="currentColor" stroke-width="1.500"/></svg></button>
                    <button class="ic" aria-label="Line snap"><svg width="16" height="16"><path d="M3 3h10v10M13 3L3 13" fill="none" stroke="currentColor" stroke-width="1.500"/></svg></button>
                    <i class="sep"></i>
                    <button class="ic on" aria-label="Geometry"><svg width="16" height="16"><path fill="#53536a" d="M2 2h12v12H2z"/><path fill="#f58220" d="M5 5h6v6H5z"/></svg></button>
                    <button class="ic on" aria-label="Handles"><svg width="16" height="16"><path fill="#53536a" d="M4 4h8v8H4z"/><path fill="#f58220" d="M2 2h3v3H2zM11 2h3v3h-3zM2 11h3v3H2zM11 11h3v3h-3z"/></svg></button>
                    <i class="sep"></i>
                    <span class="pick box auto"><select aria-label="Depth"><option>自動</option></select></span>
                </div>
                <div class="line planes">
                    <span class="pick box"><select aria-label="View plane"><option>視圖平面</option></select></span>
                    <span class="pick box"><select aria-label="Outline plane"><option>外形線平面</option></select></span>
                </div>
            </div>
            <button class="eye" aria-label="Show"><svg width="14" height="10"><use href="#i-eye"/></svg></button>
        </section>
    </div>

    <footer class="status">
        <span>如果同時選取物件與格子線/格子平面,格子線/格子平面不能被刪除.</span>
        <span>O</span>
        <span>0&nbsp; 平移</span>
        <span>目前 phase: 1, Phase 1</span>
        <span>1 物件和 0 控制點已選取</span>
    </footer>
</body>
</html>
```
FILE: styles.css
```css
* { box-sizing: border-box; margin: 0; padding: 0; }
body {
    display: flex;
    flex-direction: column;
    height: 100vh;
    padding: 0 5px 4px 1px;
    overflow: hidden;
    background: #b7b9c3;
    border-right: 1px solid #1b4f9c;
    color: #252a2e;
    font: 12px/16px "Open Sans", "Noto Sans CJK TC", sans-serif;
}
button, input, select { font: inherit; color: inherit; background: none; border: 0; border-radius: 0; }
button { display: flex; align-items: center; justify-content: center; cursor: pointer; }
svg { display: block; flex: none; }
.sprite { position: absolute; width: 0; height: 0; }

/* title bar */
.titlebar { display: flex; align-items: center; height: 29px; color: #353545; }
.logo { display: flex; align-items: center; justify-content: center; align-self: flex-end; width: 32px; height: 26px; background: #fff; }
.quick { width: 20px; height: 24px; margin-left: 5px; }
.history { display: flex; margin-left: 20px; }
.history .quick { margin-left: 0; }
.title { flex: 1; color: #000; font-size: 12px; font-weight: 400; text-align: center; white-space: nowrap; }
.account { display: flex; align-items: center; color: #252a2e; }
.help { width: 16px; height: 16px; margin-right: 18px; border-radius: 8px; background: #005a92; color: #fff; font-size: 12px; font-weight: 700; }
.login { gap: 9px; margin-right: 11px; }
.win { width: 20px; height: 24px; }
.win + .win { margin-left: 9px; }

/* tabs and ribbon */
.top { display: flex; background: #f1f1f6; }
.menu { width: 32px; background: #0063a3; color: #fff; }
.top-main { flex: 1; min-width: 0; }
.tabs { display: flex; align-items: center; height: 23px; border-bottom: 1px solid #b7b9c3; }
.arrow { width: 20px; height: 22px; margin-left: 59px; }
.tab-list { display: flex; gap: 35px; height: 22px; margin-right: auto; margin-left: -2px; white-space: nowrap; }
.tab-open { display: flex; gap: 35px; margin-right: -12px; padding: 0 13px 0 10px; border-bottom: 3px solid #0063a3; }
.tab { height: 23px; }
.latin { margin-right: -3px; }
.tab-list + .arrow { margin: 0 9px 0 0; }
.launch { display: flex; align-items: center; width: 180px; height: 20px; padding-right: 10px; background: #fff; border: 1px solid #dfdfe6; }
.launch input { flex: 1; min-width: 0; padding-left: 6px; outline: 0; }
input::placeholder { color: #55595e; font-style: italic; }

.ribbon { display: flex; height: 81px; border-bottom: 1px solid #b7b9c3; }
.pickers { display: flex; flex-direction: column; width: 51px; padding-left: 4px; border-right: 1px solid #b7b9c3; color: #353545; }
.picker { height: 40px; gap: 5px; justify-content: flex-start; }
.drop::after, .drop-end::after { content: ""; border: 3px solid transparent; border-top-color: #111; border-bottom: 0; }
.tools { display: flex; padding-left: 10px; }
.tool { flex-direction: column; justify-content: flex-start; width: 60px; padding-top: 15px; white-space: nowrap; }
.tool svg { height: 34px; color: #353545; }
.tool .bolt { width: 24px; }
.tool span { margin-top: 8px; }
.tool.drop { padding-top: 14px; }
.tool.drop span { margin-top: 7px; }
.tool.wide { width: 80px; }
.list-tools { display: flex; flex-direction: column; }
.row-tool { gap: 5px; justify-content: flex-start; white-space: nowrap; }
.row-tool svg { color: #353545; }
.row-tool:disabled, .row-tool:disabled svg { color: #acacb6; }
.drop-end::after { margin-left: auto; }
.components { width: 171px; padding: 5px 15px 0 2px; border-right: 1px solid #b7b9c3; }
.components .row-tool { height: 16px; }
.components .indent { height: 24px; margin-top: 8px; padding-left: 4px; gap: 7px; }
.components .inset { margin-top: 10px; padding-left: 3px; gap: 6px; }
.cast { width: 115px; padding-left: 2px; }
.cast .big { height: 40px; }
.cast .big + .big { padding-left: 6px; gap: 7px; }
.pour { width: 105px; padding: 5px 8px 0 9px; overflow: hidden; border-right: 1px solid #b7b9c3; }
.pour .row-tool { height: 18px; }
.pour .last { height: 36px; margin-top: 2px; overflow: hidden; }
.windows { display: flex; flex: 1; flex-direction: column; align-items: center; padding-left: 9px; }
.windows .tool { padding-top: 0; }
.windows .tool.drop span { margin-top: 5px; }
.mdi { display: flex; gap: 17px; height: 17px; align-items: center; color: #5b5b6a; }

/* model view */
.work { display: flex; flex: 1; min-height: 0; background: #f1f1f6; border-bottom: 1px solid #b7b9c3; }
.view { position: relative; flex: 1; min-width: 0; border-right: 5px solid #b7b9c3; background: linear-gradient(#fff 15%, #e6e6ec 48%, #c9c7d7 78%); }
.model { width: 100%; height: 100%; }
.grid-text { font: 15px "Noto Sans", sans-serif; text-anchor: middle; }
.axis-x, .axis-y, .axis-z { font: 10px "Noto Sans", sans-serif; text-anchor: middle; }
.axis-x { fill: #c00030; }
.axis-y { fill: #157050; }
.axis-z { fill: #4a3fd0; }
.ball-text { fill: #fff; font: 700 10px "Open Sans", sans-serif; text-anchor: middle; }
.view-cube { position: absolute; right: -11px; bottom: 12px; z-index: 1; width: 22px; height: 22px; border: 2px solid #b7b9c3; border-radius: 11px; background: #e8e8ee; color: #53536a; }

/* properties */
.props { display: flex; flex-direction: column; width: 400px; padding: 0 5px 6px; }
.props-head { display: flex; align-items: center; gap: 5px; height: 31px; margin-right: -2px; color: #50565c; }
.props-head h2 { flex: 1; color: #252a2e; font-size: 12px; font-weight: 500; }
.props-head button { width: 17px; height: 20px; }
.props-bar { display: flex; gap: 5px; height: 24px; margin: 5px 1px 0; }
.props-bar.second { height: 25px; margin: 5px 0 2px; }
.sq { width: 24px; height: 24px; border-radius: 2px; background: #b7b9c3; }
.sq:disabled { background: #acadb0; color: #d0d1d4; }
.sq.list { width: 31px; height: 25px; }
.pick { display: grid; grid-template-columns: 1fr; align-items: center; }
.pick select { grid-area: 1 / 1; width: 100%; height: 100%; appearance: none; outline: 0; }
.pick::after { content: ""; grid-area: 1 / 1; justify-self: end; border: 5px solid transparent; border-top-color: #252a2e; border-bottom: 0; pointer-events: none; }
.preset { flex: 1; margin-left: 1px; padding-right: 4px; background: #fff; border: 1px solid #dfdfe6; }
.find { display: flex; flex: 1; align-items: center; padding-right: 9px; background: #fff; border: 1px solid #dfdfe6; }
.find input { flex: 1; min-width: 0; outline: 0; }
.props-body { display: flex; flex: 1; min-height: 0; overflow: hidden; }
.fields { flex: 1; }
.fields h3, .fields h4 { display: flex; align-items: center; gap: 4px; height: 29px; padding-left: 4px; font-size: 12px; font-weight: 500; }
.fields h3::before, .fields h4::before { content: ""; border: 5px solid transparent; border-top: 8px solid #252a2e; border-bottom: 0; }
.fields h4:first-child { height: 27px; }
.nested { padding: 0 0 2px 10px; }
.fields label { display: flex; align-items: flex-start; justify-content: space-between; height: 22px; padding: 1px 0 0 1px; }
.fields input { width: 204px; height: 20px; padding: 0 6px 2px; border: 1px solid #dfdfe6; background: #fff; font-size: 11px; outline: 0; }
.track { width: 6px; margin: 5px 9px 3px 10px; border-radius: 1px; background: #c8cad6; }
.thumb { height: 64%; border-radius: 1px; background: #494d54; }
.less { align-self: flex-end; margin: 6px 3px 2px 0; color: #6e7074; text-decoration: none; }
.props-foot { display: flex; gap: 2px; padding-left: 1px; }
.modify { width: 40px; }

.side { display: flex; flex-direction: column; width: 36px; border-left: 1px solid #b7b9c3; }
.side button { height: 29px; border-bottom: 1px solid #b7b9c3; }
.side button:first-child { height: 35px; }
.side .active { background: #0063a3; color: #fff; }

/* bottom toolbars */
.docks { display: flex; align-items: flex-start; gap: 2px; height: 58px; padding-top: 1px; background: #f1f1f6; }
.dock { border: 1px solid #c9cbd6; border-left-width: 6px; height: 57px; }
.line { display: flex; align-items: center; height: 20px; }
.lines { display: flex; flex-direction: column; align-self: flex-start; }
.ic { width: 20px; height: 20px; margin-right: 2px; }
.ic.on { background: #b7b9c3; }
.ic.gray { height: 24px; background: #acadb0; color: #c6c7ca; }
.box { height: 20px; padding: 0 4px; background: #fff; border: 1px solid #dfdfe6; }
.sep { width: 2px; height: 24px; margin-right: 2px; background: #c9cbd6; }
.eye { margin-left: auto; }
.origin { width: 100px; padding: 3px 2px; }
.origin .box { display: flex; gap: 2px; margin: 0 2px 4px 1px; }
.origin .pick select { flex: 1; min-width: 0; }
.origin .line { height: 24px; }
.model-find { width: 154px; padding: 3px 3px 0; }
.model-find input { width: 100%; height: 20px; padding-left: 2px; background: #fff; border: 1px solid #dfdfe6; outline: 0; }
.model-find .line { margin-top: 7px; }
.select-dock { display: flex; align-items: center; width: 541px; height: 52px; padding: 0 5px 0 1px; }
.select-dock .lines { gap: 4px; padding-top: 2px; }
.filter { width: 73px; margin: 0 4px 0 2px; }
.snap-dock { display: flex; align-items: center; width: 386px; padding: 0 5px 0 1px; }
.snap-dock .lines { gap: 6px; padding-top: 4px; }
.auto { width: 51px; margin-left: 2px; }
.auto.box { padding-right: 9px; }
.planes { gap: 6px; padding-left: 2px; }
.planes .box { padding-right: 9px; }
.planes .box select { padding-right: 10px; }

.status { display: grid; grid-template-columns: 514px 105px 66px 220px 1fr; align-items: center; height: 25px; padding-left: 3px; background: #0063a3; color: #fff; font-size: 16px; line-height: 24px; white-space: nowrap; }
```
